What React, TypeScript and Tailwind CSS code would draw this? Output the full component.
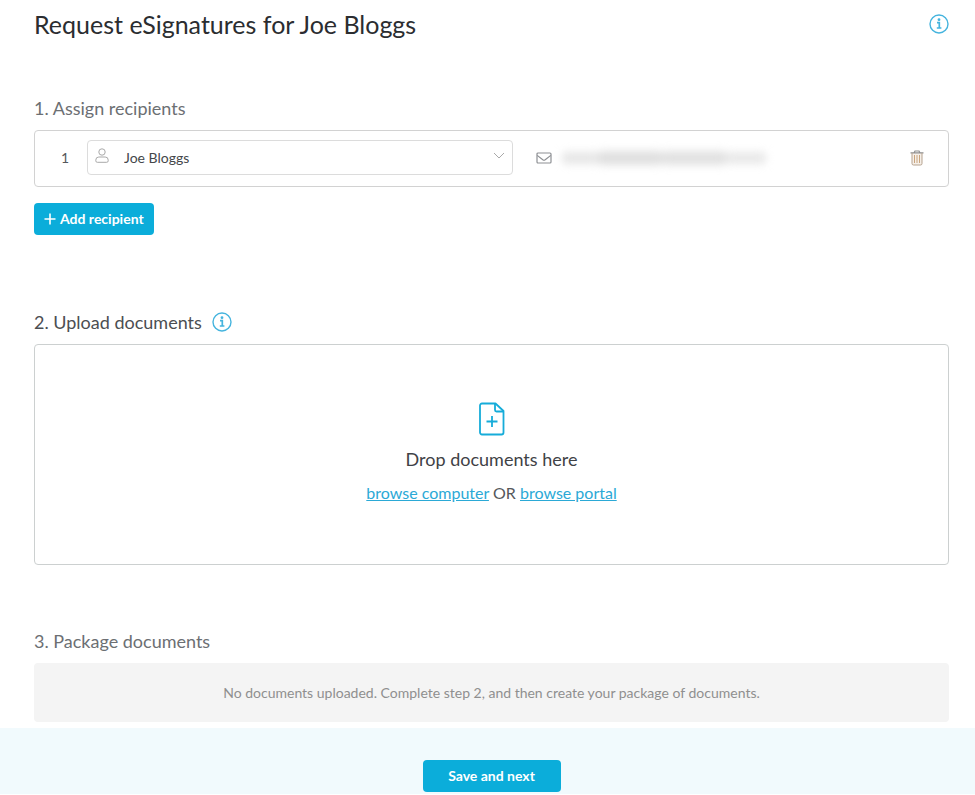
import React, { useState } from 'react';

const InfoIcon: React.FC = () => (
    <svg viewBox="0 0 20 20" className="w-5 h-5" fill="none" stroke="#45b4de" aria-hidden="true">
        <circle cx="10" cy="10" r="9" strokeWidth="1.4" />
        <circle cx="10" cy="5.7" r="1.4" fill="#45b4de" stroke="none" />
        <path d="M8 8.700h2.300v5M7.800 14h4.600" strokeWidth="1.700" />
    </svg>
);

const UserIcon: React.FC = () => (
    <svg viewBox="0 0 14 16" className="absolute left-2 top-2 w-3.5 h-4 pointer-events-none" fill="none" stroke="#a9a9a9" aria-hidden="true">
        <circle cx="7" cy="4" r="3.2" />
        <path d="M3.800 9h6.400a3 3 0 0 1 3 3v.8a1.500 1.500 0 0 1-1.500 1.500H2.300a1.500 1.500 0 0 1-1.500-1.500V12a3 3 0 0 1 3-3z" />
    </svg>
);

const ChevronIcon: React.FC = () => (
    <svg viewBox="0 0 12 8" className="absolute right-2 top-3 w-3 h-2 pointer-events-none" fill="none" stroke="#a9a9a9" aria-hidden="true">
        <path d="M1 1l5 5 5-5" />
    </svg>
);

const MailIcon: React.FC = () => (
    <svg viewBox="0 0 16 12" className="w-4 h-3 shrink-0" fill="none" stroke="#8e9094" strokeWidth="1.2" aria-hidden="true">
        <rect x="1" y="1" width="14" height="10" rx="1" />
        <path d="M1.200 3.400l5.600 4.400a2 2 0 0 0 2.400 0l5.600-4.400" />
    </svg>
);

const TrashIcon: React.FC = () => (
    <svg viewBox="0 0 14 16" className="w-3.5 h-4" fill="none" aria-hidden="true">
        <path d="M2 3h10v12H2z" fill="#f6efe8" />
        <path d="M4.200 2.600L5 1h4l.8 1.600M.5 2.800h13" stroke="#8f8f8f" strokeWidth="1.200" />
        <path d="M2 3v10.500a1.500 1.500 0 0 0 1.500 1.500h7a1.500 1.500 0 0 0 1.500-1.500V3" stroke="#b5a28f" />
        <path d="M4.500 5v8M7 5v8M9.500 5v8" stroke="#c9a57e" />
    </svg>
);

const DocumentIcon: React.FC = () => (
    <svg viewBox="0 0 26 34" className="w-[26px] h-[34px]" fill="none" stroke="#16acd9" strokeWidth="1.8" strokeLinejoin="round" aria-hidden="true">
        <path d="M3 1.500h13.500L24.500 9v21.500a2 2 0 0 1-2 2H3a2 2 0 0 1-2-2v-27a2 2 0 0 1 2-2z" />
        <path d="M16 1.500v6.500a1.500 1.500 0 0 0 1.500 1.500h7M13 14v11M7.500 19.500h11" />
    </svg>
);

const App: React.FC = () => {
    const [recipient, setRecipient] = useState('Joe Bloggs');

    return (
        <div className="bg-white font-['Lato',sans-serif] text-[#55585c]">
            <main className="pl-[34px] pr-[26px] pb-1.5">
                <header className="flex items-center justify-between h-12">
                    <h1 className="text-[25px] leading-8 text-[#2b2d30]">Request eSignatures for Joe Bloggs</h1>
                    <button type="button" aria-label="About eSignatures">
                        <InfoIcon />
                    </button>
                </header>

                <section className="mt-12">
                    <h2 className="text-lg leading-6 text-[#6c6f73]">1. Assign recipients</h2>
                    <div className="mt-2.5 flex items-start border border-[#d2d2d2] rounded px-6 pt-[9px] pb-[11px]">
                        <span className="w-7 pl-0.5 text-sm leading-[35px]">1</span>
                        <div className="relative w-[426px]">
                            <UserIcon />
                            <select
                                aria-label="Recipient"
                                value={recipient}
                                onChange={e => setRecipient(e.target.value)}
                                className="block w-full h-[35px] appearance-none bg-transparent border border-[#dcdcdc] rounded pl-9 pr-8 text-sm text-[#44474a]"
                            >
                                <option>Joe Bloggs</option>
                            </select>
                            <ChevronIcon />
                        </div>
                        <div className="flex items-center gap-2.5 ml-[23px] h-[35px]">
                            <MailIcon />
                            <div className="flex items-center blur-xs" role="img" aria-label="Hidden email">
                                <span className="w-9 h-3 rounded bg-[#e6e6e6]" />
                                <span className="w-16 h-3.5 rounded bg-[#dfdfdf]" />
                                <span className="w-16 h-3.5 rounded bg-[#e1e1e1]" />
                                <span className="w-10 h-3 rounded bg-[#e8e8e8]" />
                            </div>
                        </div>
                        <button type="button" aria-label="Delete recipient" className="ml-auto h-[35px]">
                            <TrashIcon />
                        </button>
                    </div>
                    <button type="button" className="mt-4 flex items-center gap-1 h-8 px-2.5 rounded bg-[#0badda] text-white text-sm font-bold">
                        <svg viewBox="0 0 12 12" className="w-3 h-3" stroke="currentColor" strokeWidth="1.6" aria-hidden="true">
                            <path d="M6 .5v11M.5 6h11" />
                        </svg>
                        Add recipient
                    </button>
                </section>

                <section className="mt-[75px]">
                    <div className="flex items-center gap-2.5">
                        <h2 className="text-lg leading-6 text-[#4b4e52]">2. Upload documents</h2>
                        <button type="button" aria-label="About uploading documents">
                            <InfoIcon />
                        </button>
                    </div>
                    <div className="mt-2.5 flex flex-col items-center pt-[57px] pb-[59px] border border-[#ccd0d0] rounded">
                        <DocumentIcon />
                        <p className="mt-[11px] text-lg leading-6 text-[#3f4246]">Drop documents here</p>
                        <p className="mt-2.5 text-base leading-6">
                            <a href="#computer" className="text-[#2ba9d6] underline">browse computer</a> OR{' '}
                            <a href="#portal" className="text-[#2ba9d6] underline">browse portal</a>
                        </p>
                    </div>
                </section>

                <section className="mt-16">
                    <h2 className="text-lg leading-6 text-[#6c6f73]">3. Package documents</h2>
                    <p className="mt-2.5 py-5 rounded bg-[#f4f4f4] text-center text-sm leading-[19px] text-[#8f8f8f]">
                        No documents uploaded. Complete step 2, and then create your package of documents.
                    </p>
                </section>
            </main>

            <footer className="flex justify-center bg-[#f1fafd] pl-[34px] pr-[26px] pt-8 pb-0.5">
                <button type="button" className="w-[138px] h-8 rounded bg-[#0badda] text-white text-sm font-bold">
                    Save and next
                </button>
            </footer>
        </div>
    );
};

export default App;
